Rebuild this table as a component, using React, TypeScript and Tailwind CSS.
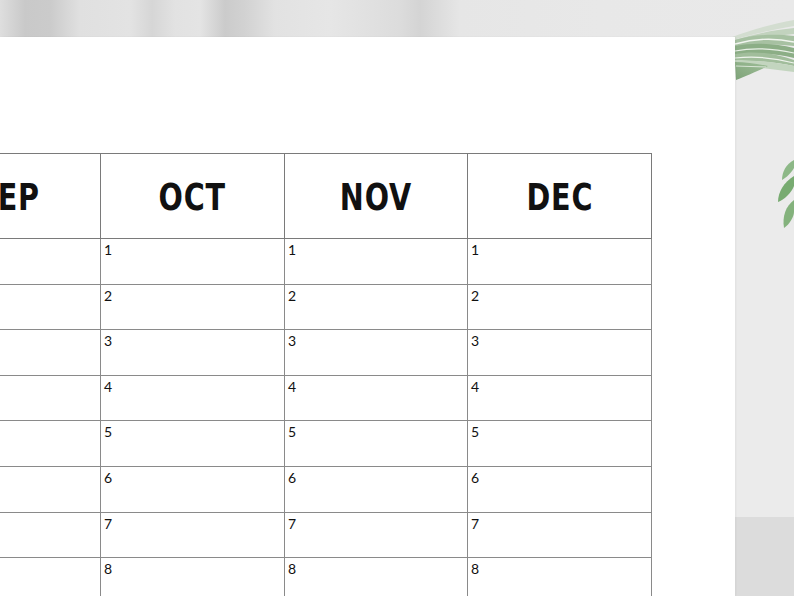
import React from "react";

const months = ["SEP", "OCT", "NOV", "DEC"];
const days = [1, 2, 3, 4, 5, 6, 7, 8];

function TopLeaf() {
  return (
    <svg className="absolute left-[722px] top-[16px]" width="72" height="68" viewBox="0 0 72 68">
      <defs>
        <linearGradient id="lg1" x1="0" y1="1" x2="1" y2="0">
          <stop offset="0" stopColor="#7ea378" />
          <stop offset="1" stopColor="#9fbe99" />
        </linearGradient>
      </defs>
      <path d="M8 22 C 28 14, 50 8, 72 4 L 72 10 C 50 14, 30 18, 12 24 Z" fill="#d3ddd0" />
      <path d="M12 24 C 32 18, 52 14, 72 12 L 72 18 C 52 20, 32 22, 14 26 Z" fill="#c2d3be" />
      <path d="M13 24 C 34 18, 54 18, 72 20 L 72 30 C 54 28, 34 28, 13 32 Z" fill="#a7c1a2" />
      <path d="M13 30 C 34 26, 54 28, 72 32 L 72 42 C 54 38, 34 36, 13 40 Z" fill="#8cae86" />
      <path d="M13 38 C 34 34, 54 38, 72 44 L 72 50 C 54 46, 34 44, 13 46 Z" fill="#a1bd9b" />
      <path d="M13 44 C 30 44, 52 46, 72 50 L 72 56 C 52 54, 30 50, 13 50 Z" fill="#c3d5bf" />
      <path d="M13 46 C 24 46, 36 48, 46 50 C 38 54, 24 60, 14 64 Z" fill="url(#lg1)" />
      <path d="M13 28 C 34 22, 54 22, 72 26" stroke="#f1f5ef" strokeWidth="1.4" fill="none" />
      <path d="M13 35 C 34 31, 54 33, 72 37" stroke="#e9f0e7" strokeWidth="1.2" fill="none" />
      <path d="M13 42 C 34 40, 54 42, 72 47" stroke="#eef3ec" strokeWidth="1.2" fill="none" />
      <path d="M14 50 C 24 50, 34 51, 44 51" stroke="#d9e5d6" strokeWidth="1" fill="none" />
    </svg>
  );
}

function SideLeaf() {
  return (
    <svg className="absolute left-[774px] top-[156px]" width="20" height="84" viewBox="0 0 20 84">
      <path d="M20 4 C 12 8, 8 16, 8 24 C 12 22, 18 16, 20 12 Z" fill="#8db887" />
      <path d="M20 20 C 10 26, 4 36, 4 46 C 10 44, 18 36, 20 30 Z" fill="#78ab71" />
      <path d="M20 44 C 12 50, 8 60, 10 72 C 16 68, 20 60, 20 56 Z" fill="#84b27d" />
    </svg>
  );
}

export default function App() {
  return (
    <div className="relative w-[794px] h-[596px] overflow-hidden bg-[#ebebeb]">
      <div className="h-[37px] w-full bg-[linear-gradient(90deg,#dedede_0px,#c9c9c9_25px,#cbcbcb_50px,#e0e0e0_80px,#e3e3e3_130px,#d6d6d6_152px,#e2e2e2_175px,#e4e4e4_200px,#cbcbcb_225px,#d2d2d2_245px,#e2e2e2_275px,#e6e6e6_330px,#dcdcdc_400px,#d4d4d4_420px,#e6e6e6_460px,#e8e8e8_600px,#e9e9e9_794px)]" />
      <div className="flex h-[559px]">
        <div className="relative z-10 w-[735px] h-full bg-white overflow-hidden shadow-[1px_0_2px_rgba(0,0,0,0.05)]">
          <div className="mt-[116px] ml-[-83px] w-[735px] border-t border-[#7a7a7a]">
            <div className="grid grid-cols-[184px_184px_183px_184px]">
              {months.map((m) => (
                <div
                  key={m}
                  className="h-[85px] border-r border-b border-[#7a7a7a] flex items-center justify-center"
                >
                  <span className="font-['DejaVu_Sans_Condensed','DejaVu_Sans',sans-serif] font-bold text-[37px] leading-none text-[#111] scale-x-[0.86] tracking-[1px] pt-[2px]">
                    {m}
                  </span>
                </div>
              ))}
              {days.map((d) =>
                months.map((m, i) => (
                  <div
                    key={m + d}
                    className="h-[45.6px] border-r border-b border-[#8a8a8a] pl-[3px] pt-[4px] font-['Lato','Open_Sans',sans-serif] text-[14px] leading-[14px] text-[#111]"
                  >
                    {i === 0 ? "" : d}
                  </div>
                ))
              )}
            </div>
          </div>
        </div>
        <div className="flex-1 flex flex-col">
          <div className="h-[480px] bg-[#ebebeb]" />
          <div className="flex-1 bg-[#dcdcdc]" />
        </div>
      </div>
      <TopLeaf />
      <SideLeaf />
    </div>
  );
}
